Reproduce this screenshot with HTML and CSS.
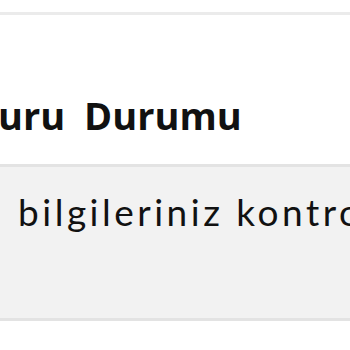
FILE: index.html
```html
<!DOCTYPE html>
<html lang="tr">
<head>
    <meta charset="UTF-8">
    <meta name="viewport" content="width=device-width, initial-scale=1.0">
    <title>Başvuru Durumu</title>
    <link rel="stylesheet" href="styles.css">
</head>
<body>
    <header class="topbar"></header>

    <main class="content">
        <h1 class="title">Başvuru Durumu</h1>

        <div class="notice">
            <p class="notice-text">Başvuru bilgileriniz kontrol ediliyor.</p>
        </div>
    </main>
</body>
</html>
```

FILE: styles.css
```css
:root {
    --color-text: #111111;
    --color-line: #ebebeb;
    --color-box: #f2f2f2;
    --color-box-border: #e3e3e3;
}

* {
    margin: 0;
    padding: 0;
    box-sizing: border-box;
}

body {
    background: #ffffff;
    color: var(--color-text);
    font-family: "Open Sans", "Liberation Sans", sans-serif;
    overflow: hidden;
}

.topbar {
    height: 15px;
    border-bottom: 3px solid var(--color-line);
}

.content {
    padding-top: 75px;
}

.title {
    font-family: "Open Sans", sans-serif;
    font-weight: 700;
    font-size: 38px;
    line-height: 50px;
    white-space: nowrap;
    word-spacing: 9px;
    margin-left: -91px;
    margin-bottom: 24px;
}

.notice {
    background: var(--color-box);
    border-top: 3px solid var(--color-box-border);
    border-bottom: 3px solid var(--color-box-border);
    height: 157px;
    padding-top: 23px;
    overflow: hidden;
}

.notice-text {
    font-family: Lato, "Open Sans", sans-serif;
    font-size: 37px;
    line-height: 1.2;
    letter-spacing: 3.5px;
    white-space: nowrap;
    margin-left: -151px;
}
```
